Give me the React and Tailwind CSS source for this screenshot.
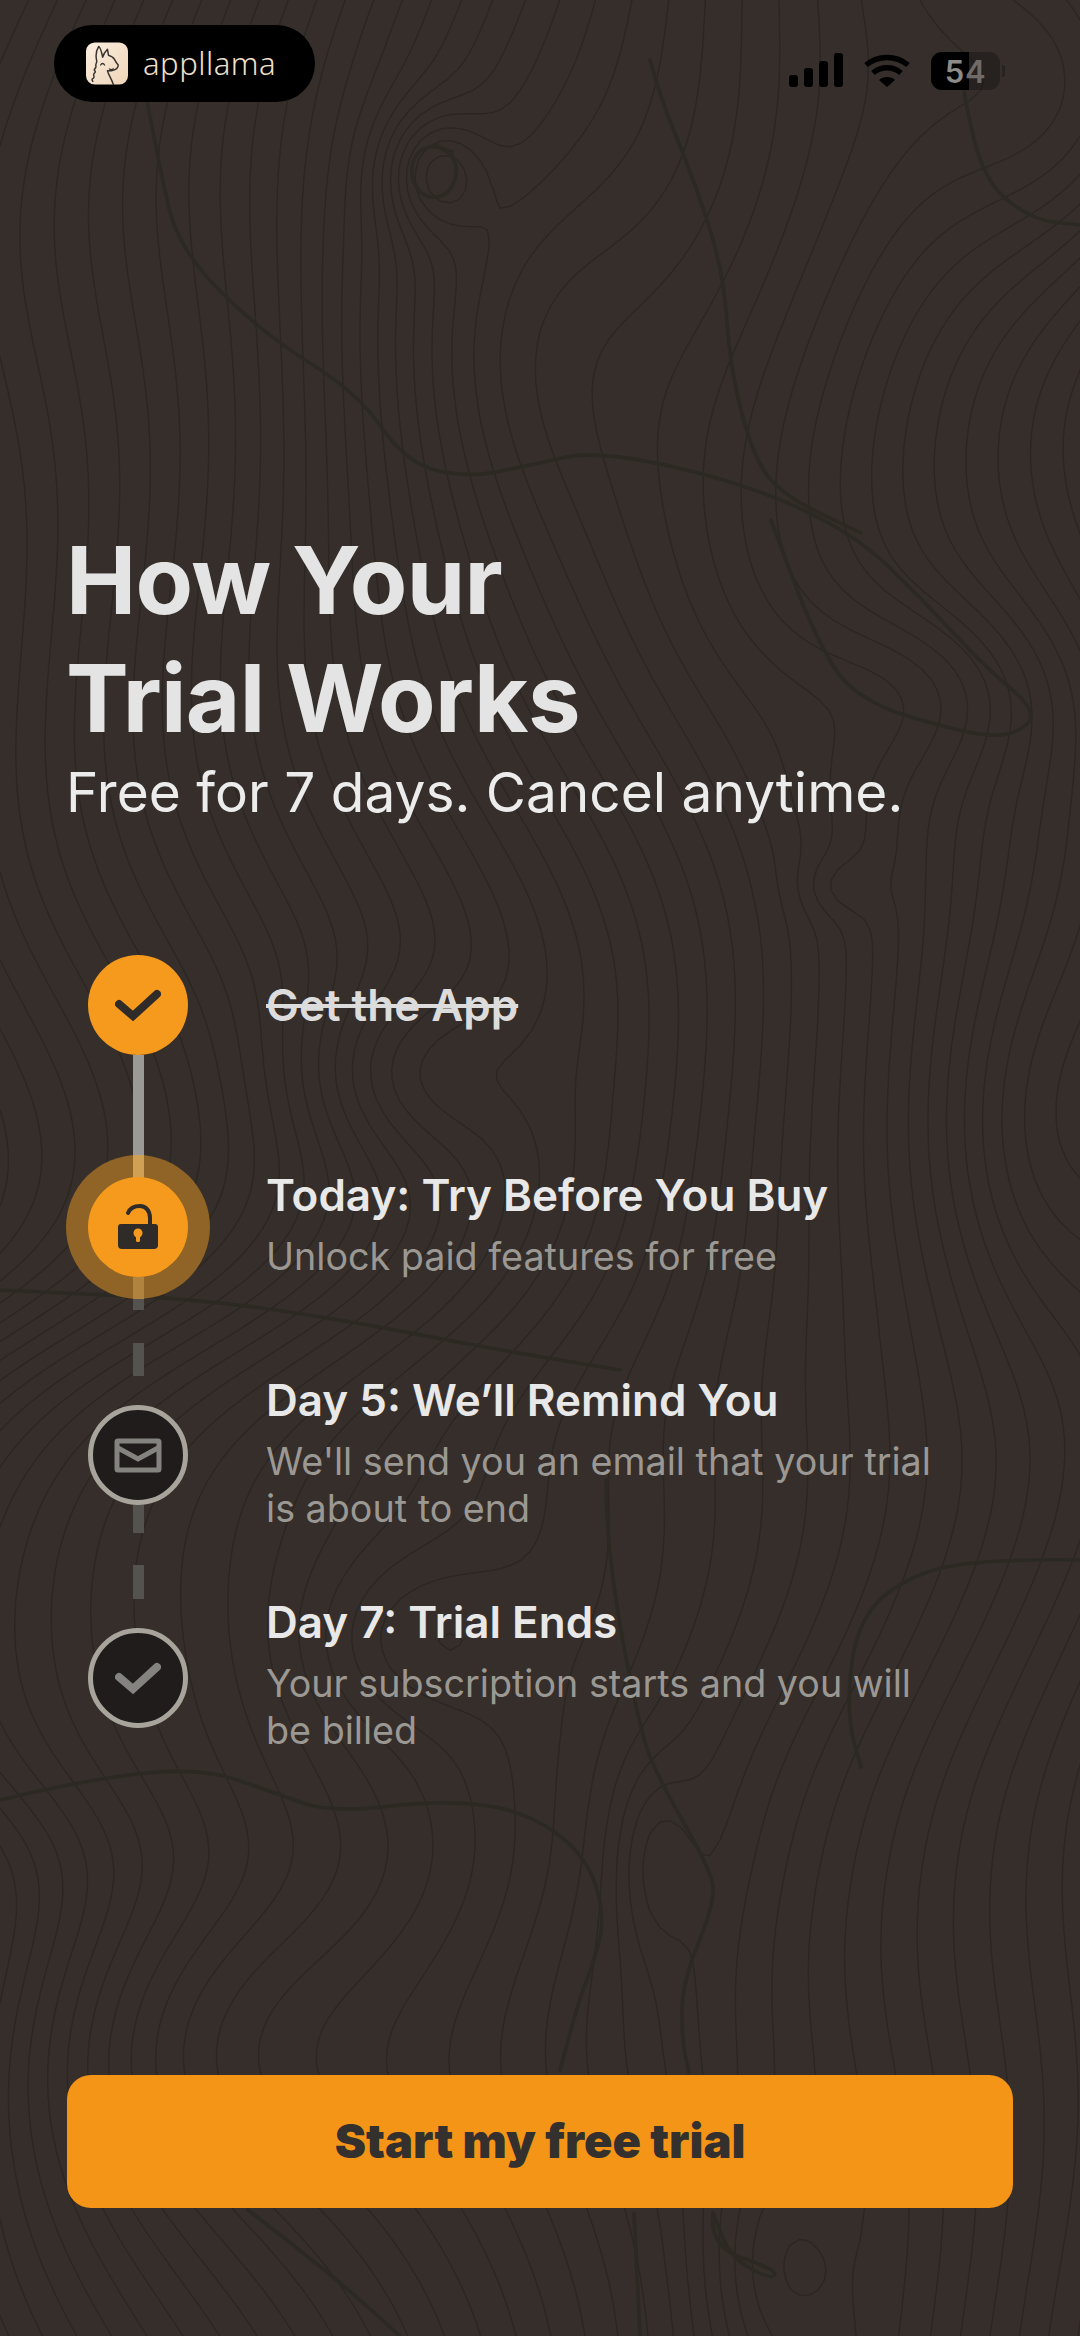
import React from "react";

// topographic backdrop: fine contours of a height field (marching squares) + the heavy index lines traced by hand
const bumps = [
  [434, 172, 5, 50, 60],
  [500, 330, 5, 170, 220],
  [1080, 110, -5, 150, 180],
  [410, 1075, 4, 120, 90],
  [840, 887, 1.5, 40, 30],
  [930, 690, -3, 130, 90],
  [180, 2020, 5, 230, 190],
  [413, 1640, 3, 110, 90],
  [654, 1860, 2.5, 40, 90],
  [770, 2270, 3, 70, 120],
  [1040, 1150, 3, 110, 200],
];

const height = (x, y) => {
  const u = x + 70 * Math.sin(y / 280) + 30 * Math.sin(y / 110 + x / 260);
  let h = u / 32 + 5 * Math.tanh((y - 1330) / 110) * Math.exp(-((x / 620) ** 2));
  h -= 4 * Math.tanh((y - 1820) / 100) * Math.exp(-((x / 560) ** 2));
  for (const [cx, cy, a, sx, sy] of bumps) {
    h += a * Math.exp(-(((x - cx) ** 2) / (sx * sx) + ((y - cy) ** 2) / (sy * sy)));
  }
  return h;
};

const buildContours = () => {
  const step = 10;
  const lines = [];
  const cols = Math.ceil(1080 / step) + 1;
  const rows = Math.ceil(2336 / step) + 1;
  const grid = [];
  for (let r = 0; r <= rows; r++) {
    const row = [];
    for (let c = 0; c <= cols; c++) row.push(height(c * step, r * step));
    grid.push(row);
  }
  for (let level = -20; level <= 56; level++) {
    for (let r = 0; r < rows; r++) {
      for (let c = 0; c < cols; c++) {
        const x = c * step;
        const y = r * step;
        const a = grid[r][c];
        const b = grid[r][c + 1];
        const d = grid[r + 1][c + 1];
        const e = grid[r + 1][c];
        const pts = [];
        if (a < level !== b < level) pts.push([x + (step * (level - a)) / (b - a), y]);
        if (b < level !== d < level) pts.push([x + step, y + (step * (level - b)) / (d - b)]);
        if (e < level !== d < level) pts.push([x + (step * (level - e)) / (d - e), y + step]);
        if (a < level !== e < level) pts.push([x, y + (step * (level - a)) / (e - a)]);
        for (let i = 0; i + 1 < pts.length; i += 2) {
          lines.push(`M${pts[i][0].toFixed(1)} ${pts[i][1].toFixed(1)}L${pts[i + 1][0].toFixed(1)} ${pts[i + 1][1].toFixed(1)}`);
        }
      }
    }
  }
  return lines.join("");
};

const contours = buildContours();

const smooth = (pts) => {
  let d = `M${pts[0][0]} ${pts[0][1]}`;
  for (let i = 1; i < pts.length - 1; i++) {
    const mx = (pts[i][0] + pts[i + 1][0]) / 2;
    const my = (pts[i][1] + pts[i + 1][1]) / 2;
    d += `Q${pts[i][0]} ${pts[i][1]} ${mx} ${my}`;
  }
  const last = pts[pts.length - 1];
  return `${d}L${last[0]} ${last[1]}`;
};

const indexLines = [
  [[145, 90], [160, 170], [179, 250], [262, 333], [358, 393], [406, 463], [468, 478], [530, 465], [599, 450], [744, 483], [854, 533], [923, 600], [985, 667], [1040, 713], [1012, 737], [964, 733], [854, 700], [813, 633], [771, 520]],
  [[650, 60], [661, 100], [689, 167], [723, 267], [730, 367], [751, 450], [778, 493], [861, 533]],
  [[960, 60], [964, 100], [985, 183], [1033, 220], [1080, 225]],
  [[434, 145], [452, 152], [458, 172], [450, 192], [434, 199], [418, 192], [410, 172], [416, 152], [434, 145], [452, 152]],
  [[0, 1290], [69, 1293], [207, 1300], [344, 1320], [482, 1347], [620, 1370]],
  [[0, 1800], [83, 1780], [200, 1767], [275, 1793], [331, 1813], [441, 1800], [523, 1810], [585, 1853], [606, 1917], [592, 1967], [579, 2000], [560, 2070]],
  [[606, 1480], [606, 1550], [640, 1733], [661, 1783], [709, 1867], [716, 1900], [682, 1983], [682, 2040], [689, 2073]],
  [[1080, 1560], [964, 1558], [888, 1587], [854, 1633], [847, 1717], [861, 1767]],
  [[248, 2210], [330, 2273], [400, 2336]],
  [[713, 2213], [709, 2247], [778, 2270], [771, 2280], [730, 2257], [713, 2213]],
  [[634, 2213], [640, 2336]],
];

const TopoLines = () => (
  <svg className="absolute inset-0" width="1080" height="2336" viewBox="0 0 1080 2336" fill="none" strokeLinecap="round">
    <path d={contours} stroke="#2b2622" strokeWidth="1.3" />
    {indexLines.map((pts, i) => (
      <path key={i} d={smooth(pts)} stroke="#2c2923" strokeWidth="3.6" />
    ))}
  </svg>
);

const LlamaIcon = () => (
  <svg width="42" height="43" viewBox="0 0 43 43" fill="none">
    <defs>
      <linearGradient id="llamaBg" x1="0" y1="0" x2="1" y2="1">
        <stop offset="0" stopColor="#fbeee0" />
        <stop offset="1" stopColor="#eed5b8" />
      </linearGradient>
    </defs>
    <rect width="43" height="43" rx="9" fill="url(#llamaBg)" />
    <path
      d="M11 19c-1-4-1-10 2-15 2 1 3 6 4 11 1-3 3-6 5-8l1 6c3 1 5 2 6 4 1 2 2 4 4 6 0 3-2 5-7 6h-4c1 4 4 8 6 14M11 19c0 2-1 3-1 4s1 2-1 4 2 2 0 4-1 2-1 3 1 2-1 3 0 2 0 3"
      stroke="#37322f"
      strokeWidth="1.5"
      strokeLinecap="round"
      strokeLinejoin="round"
    />
    <path d="M15 23c1-2 3-2 4 0M24 27c1 1 2 1 4 0" stroke="#37322f" strokeWidth="1.3" strokeLinecap="round" />
  </svg>
);

const CheckIcon = ({ color }) => (
  <svg width="46" height="34" viewBox="0 0 46 34" fill="none">
    <path d="M4 16l14 12L42 6" stroke={color} strokeWidth="8" strokeLinecap="round" strokeLinejoin="miter" />
  </svg>
);

const LockIcon = () => (
  <svg width="42" height="46" viewBox="0 0 42 46" fill="none">
    <path d="M11 9C13 4 18 2 23 2c6 0 10 5 10 12v6" stroke="#2f2b29" strokeWidth="4" strokeLinecap="round" />
    <path d="M4 20h34a3 3 0 0 1 3 3v18a4 4 0 0 1-4 4H5a4 4 0 0 1-4-4V23a3 3 0 0 1 3-3z" fill="#2f2b29" />
    <circle cx="21" cy="29" r="4.500" fill="#f59a1c" />
    <rect x="19" y="30" width="4" height="8" rx="1.500" fill="#f59a1c" />
  </svg>
);

const MailIcon = () => (
  <svg width="48" height="35" viewBox="0 0 48 35" fill="none" stroke="#85837f" strokeWidth="5">
    <rect x="3" y="3" width="42" height="29" rx="1" />
    <path d="M4 10l20 11L44 10" />
  </svg>
);

const Signal = () => (
  <svg width="54" height="36" viewBox="0 0 54 36" fill="#000">
    <rect x="0" y="22" width="9" height="12" rx="3" />
    <rect x="15" y="15" width="9" height="19" rx="3" />
    <rect x="30" y="8" width="9" height="26" rx="3" />
    <rect x="45" y="0" width="9" height="34" rx="3" />
  </svg>
);

const Wifi = () => (
  <svg width="46" height="36" viewBox="0 0 46 34" fill="none" stroke="#000" strokeWidth="5.500">
    <path d="M2 11c12-10 30-10 42 0" />
    <path d="M9 19c8-7 20-7 28 0" />
    <path d="M23 33l-8-7c4-4 12-4 16 0z" fill="#000" stroke="none" />
  </svg>
);

const Battery = () => (
  <div className="flex items-center gap-[2px]">
    <div className="relative flex h-[38px] w-[69px] items-center justify-center overflow-hidden rounded-[11px] bg-black/25">
      <div className="absolute inset-y-0 left-0 w-[38px] bg-black" />
      <span className="relative text-[31px] font-semibold leading-none tracking-wide text-[#8d8a87]">
        5<span className="text-[#6f6b68]">4</span>
      </span>
    </div>
    <div className="h-[12px] w-[3px] rounded-r-full bg-black/25" />
  </div>
);

const Step = ({ title, desc, className }) => (
  <div className={className}>
    <h3 className="text-[44px] font-semibold leading-[52px] text-[#e8e8e8]">{title}</h3>
    {desc && <p className="mt-[12px] text-[37.7px] leading-[47px] text-[#9b9894]">{desc}</p>}
  </div>
);

const Node = ({ children }) => (
  <div className="flex h-[100px] w-[100px] shrink-0 items-center justify-center rounded-full border-[5px] border-[#a8a49c] bg-[#1f1c1b]">
    {children}
  </div>
);

const Dash = ({ className }) => <div className={`w-[11px] bg-[#55534f] ${className}`} />;

export default function App() {
  return (
    <div className="relative flex h-[2336px] w-[1080px] flex-col overflow-hidden bg-[#352e2a] font-['Inter',sans-serif]">
      <TopoLines />

      {/* status bar */}
      <div className="relative flex items-start justify-between pl-[54px] pr-[75px] pt-[25px]">
        <div className="flex h-[77px] w-[261px] items-center gap-[15px] rounded-full bg-black pl-[32px]">
          <LlamaIcon />
          <span className="font-['Noto_Sans',sans-serif] text-[31px] font-light leading-none tracking-[0.5px] text-[#f0e0cc]">appllama</span>
        </div>
        <div className="mt-[27px] flex items-center gap-[21px]">
          <Signal />
          <Wifi />
          <Battery />
        </div>
      </div>

      {/* heading */}
      <div className="relative mt-[419px] px-[66px]">
        <h1 className="text-[94px] font-bold leading-[118px] tracking-[-0.7px] text-[#e4e4e4]">
          How Your
          <br />
          Trial Works
        </h1>
        <p className="mt-[1px] text-[55px] leading-[68px] text-[#ececec]">Free for 7 days. Cancel anytime.</p>
      </div>

      {/* timeline */}
      <div className="relative mt-[129px] flex pl-[66px]">
        <div className="flex w-[144px] flex-col items-center">
          <div className="flex h-[100px] w-[100px] items-center justify-center rounded-full bg-[#f59a1c]">
            <CheckIcon color="#2f2b29" />
          </div>
          <div className="h-[100px] w-[11px] bg-[#9c9a96]" />
          <div className="relative flex h-[144px] w-[144px] items-center justify-center rounded-full bg-[#8f6426]">
            <div className="absolute top-0 h-[23px] w-[11px] bg-[#d0a055]" />
            <div className="absolute bottom-0 h-[22px] w-[11px] bg-[#b0843e]" />
            <div className="relative flex h-[100px] w-[100px] items-center justify-center rounded-full bg-[#f59a1c]">
              <LockIcon />
            </div>
          </div>
          <Dash className="h-[11px]" />
          <Dash className="mt-[33px] h-[33px]" />
          <div className="mt-[29px]">
            <Node>
              <MailIcon />
            </Node>
          </div>
          <Dash className="h-[28px]" />
          <Dash className="mt-[32px] h-[34px]" />
          <div className="mt-[29px]">
            <Node>
              <CheckIcon color="#85837f" />
            </Node>
          </div>
        </div>

        <div className="ml-[56px] w-[720px]">
          <div className="mt-[24px] text-[44px] font-semibold leading-[52px] text-[#dcdcdc] line-through">Get the App</div>
          <Step className="mt-[138px]" title="Today: Try Before You Buy" desc="Unlock paid features for free" />
          <Step className="mt-[94px]" title="Day 5: We’ll Remind You" desc={<>We'll send you an email that your trial<br />is about to end</>} />
          <Step className="mt-[64px]" title="Day 7: Trial Ends" desc={<>Your subscription starts and you will<br />be billed</>} />
        </div>
      </div>

      {/* cta */}
      <div className="relative mb-[128px] mt-auto px-[67px]">
        <button className="flex h-[133px] w-[946px] items-center justify-center rounded-[24px] bg-[#f59518] text-[47px] font-black text-[#33302e]">
          Start my free trial
        </button>
      </div>
    </div>
  );
}
